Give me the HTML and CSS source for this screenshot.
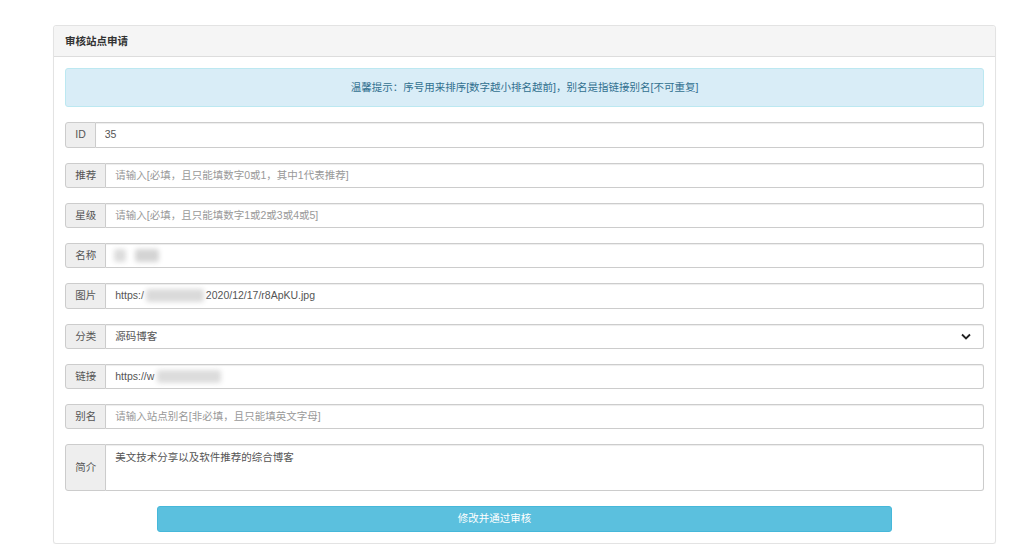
FILE: index.html
```html
<!DOCTYPE html>
<html lang="zh-CN">
<head>
<meta charset="utf-8">
<title>审核站点申请</title>
<link rel="stylesheet" href="styles.css">
</head>
<body>
<div class="panel">
  <div class="panel-heading">审核站点申请</div>
  <div class="panel-body">
    <div class="alert">温馨提示：序号用来排序[数字越小排名越前]，别名是指链接别名[不可重复]</div>
    <div class="form">
      <div class="group">
        <span class="addon">ID</span>
        <div class="field">35</div>
      </div>
      <div class="group">
        <span class="addon">推荐</span>
        <div class="field ph">请输入[必填，且只能填数字0或1，其中1代表推荐]</div>
      </div>
      <div class="group">
        <span class="addon">星级</span>
        <div class="field ph">请输入[必填，且只能填数字1或2或3或4或5]</div>
      </div>
      <div class="group">
        <span class="addon">名称</span>
        <div class="field"><span class="blur b1"></span><span class="blur b2"></span></div>
      </div>
      <div class="group">
        <span class="addon">图片</span>
        <div class="field">https:/<span class="blur b3"></span>2020/12/17/r8ApKU.jpg</div>
      </div>
      <div class="group">
        <span class="addon">分类</span>
        <div class="field select">源码博客
          <svg class="chev" width="10" height="7" viewBox="0 0 10 7"><polyline points="1,1.5 5,5.5 9,1.5" fill="none" stroke="#222" stroke-width="1.8"/></svg>
        </div>
      </div>
      <div class="group">
        <span class="addon">链接</span>
        <div class="field">https://w<span class="blur b4"></span></div>
      </div>
      <div class="group">
        <span class="addon">别名</span>
        <div class="field ph">请输入站点别名[非必填，且只能填英文字母]</div>
      </div>
      <div class="group tall">
        <span class="addon">简介</span>
        <div class="field area">美文技术分享以及软件推荐的综合博客</div>
      </div>
    </div>
    <div class="actions">
      <button class="btn" type="button">修改并通过审核</button>
    </div>
  </div>
</div>
</body>
</html>
```
FILE: styles.css
```css
html, body {
  margin: 0;
  padding: 0;
  background: #fff;
}
body {
  font-family: "Liberation Sans", Arial, "Noto Sans CJK SC", sans-serif;
  font-size: 10.5px;
  line-height: 15px;
  color: #333;
  padding: 25px 28px 0 53px;
}
.panel {
  border: 1px solid #e3e3e3;
  border-radius: 3px;
  background: #fff;
  box-shadow: 0 1px 1px rgba(0,0,0,.04);
}
.panel-heading {
  background: #f5f5f5;
  border-bottom: 1px solid #ddd;
  padding: 7.5px 11px 7.5px 11px;
  font-weight: bold;
  color: #333;
  border-radius: 3px 3px 0 0;
}
.panel-body {
  padding: 11.25px 11.25px 11.5px 11.25px;
}
.alert {
  background: #d9edf7;
  border: 1px solid #bce8f1;
  border-radius: 3px;
  color: #31708f;
  text-align: center;
  padding: 11px 11px;
  margin-bottom: 15px;
}
.form {
  display: flex;
  flex-direction: column;
  gap: 15px;
}
.group {
  display: flex;
  height: 25.25px;
}
.group.tall {
  height: 46.3px;
}
.addon {
  display: flex;
  align-items: center;
  justify-content: center;
  padding: 0 9px;
  background: #eee;
  border: 1px solid #ccc;
  border-radius: 3px 0 0 3px;
  color: #555;
}
.field {
  flex: 1;
  display: flex;
  align-items: center;
  padding: 0 9px;
  border: 1px solid #ccc;
  border-left: 0;
  border-radius: 0 3px 3px 0;
  box-shadow: inset 0 1px 1px rgba(0,0,0,.075);
  color: #555;
  background: #fff;
}
.field.ph {
  color: #999;
}
.field.select {
  justify-content: space-between;
  padding-right: 12px;
}
.field.area {
  align-items: flex-start;
  padding-top: 4.5px;
}
.chev {
  display: block;
}
.blur {
  display: inline-block;
  height: 13px;
  background: #d4d4d4;
  filter: blur(2.5px);
  border-radius: 3px;
}
.b1 { width: 12px; margin-left: -1px; background: #dcdcdc; }
.b2 { width: 24px; margin-left: 9px; }
.b3 { width: 58px; margin: 0 2px; background: #dadada; }
.b4 { width: 64px; margin-left: 3px; background: #dcdcdc; }
.actions {
  display: flex;
  justify-content: center;
  margin-top: 15.5px;
}
.btn {
  width: 80%;
  height: 25.5px;
  border: 1px solid #46b8da;
  border-radius: 3px;
  background: #5bc0de;
  color: #fff;
  font-family: inherit;
  font-size: 10.5px;
  line-height: 15px;
  padding: 0 60px 0 0;
  cursor: pointer;
}
```
